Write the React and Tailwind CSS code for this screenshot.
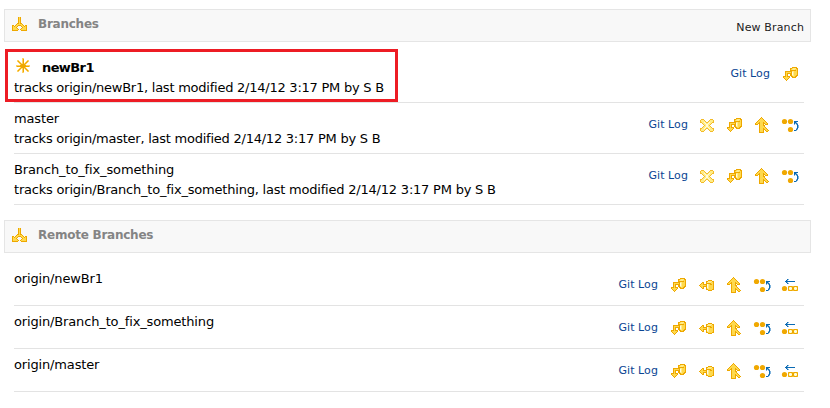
import React from 'react';

const palette = {
  G: '#eea800',
  H: '#f3bb2a',
  S: '#fed266',
  F: '#fed94e',
  L: '#ffec88',
  W: '#fffbe0',
  B: '#0a6ab4',
  b: '#7fb2da',
};

const bitmaps = {
  branch: [
    '......GFG......',
    '......GFG......',
    '......GFG......',
    '......GFG......',
    '......GFG......',
    '......GFG......',
    '.....GGFGG.....',
    '....GFFFFFG....',
    'GG.GFFGGGFFG.GG',
    'GFGFFG...GFFGFG',
    'GFFFG.....GFFFG',
    'GFFFFG...GFFFFG',
    'GFFFFFG.GFFFFFG',
    'GGGGGG...GGGGGG',
  ],
  star: [
    '......SS.......',
    '......SG.......',
    '.SS...SG...SS..',
    '.SGS..SG..SGS..',
    '..SGS.SG.SGS...',
    '...SGSSGSGS....',
    '....SGGGGS.....',
    'SSSSGGGGGGSSSS.',
    'SGGGGGGGGGGGGS.',
    '....SGGGGS.....',
    '...SGSSGSGS....',
    '..SGS.SG.SGS...',
    '.SGS..SG..SGS..',
    '.SS...SG...SS..',
    '......SS.......',
  ],
  delete: [
    '',
    '',
    '..HHH......HHH..',
    '.HLLLH....HLLLH.',
    '.HLLLLH..HLLLLH.',
    '.HHLLWLHHLWLLHH.',
    '...HLLWLLWLLH...',
    '....HLLWWLLH....',
    '.....HLWWLH.....',
    '....HLLWWLLH....',
    '...HLLWLLWLLH...',
    '.HHLLWLHHLWLLHH.',
    '.HLLLLH..HLLLLH.',
    '.HLLLH....HLLLH.',
    '..HHH......HHH..',
  ],
  pull: [
    '',
    '.........GGGGG..',
    '.......GGFLLLGG.',
    '.......GFLLLFFG.',
    '.......GGGGGGFG.',
    '..GGGGGGGLLFFFG.',
    '..GFFFFFGWLFFFG.',
    '..GFGGGGGWLFFFG.',
    '..GFG..GGWLFFFG.',
    '..GFG..GGLLFFGG.',
    'GGGFGGG.GGFFGG..',
    'GFFFFFG..GGGG...',
    '.GFFFG..........',
    '..GFG...........',
    '...G............',
  ],
  push: [
    '',
    '',
    '',
    '.........GGGG...',
    '.......GGLLLLGG.',
    '...GG..GLLLLFFG.',
    '..GFG..GGGGGFFG.',
    '.GFFGGGGWLFGGFG.',
    'GFFFFFFGWLFFFFG.',
    '.GFFGGGGWLFFFFG.',
    '..GFG..GWLFFFFG.',
    '...GG..GLLFFFFG.',
    '.......GGFFFFGG.',
    '.........GGGG...',
  ],
  merge: [
    '......G.......',
    '.....GFG......',
    '....GFFFG.....',
    '...GFFFFFG....',
    '..GFFFFFFFG...',
    '.GFFGFFFGFFG..',
    'GFFGGFFFGGFFG.',
    'GGG.GFFFG.GGG.',
    '....GFFFGG....',
    '....GFFFFG....',
    '....GFFFFFG...',
    '....GFFFGFFG..',
    '....GFFFGGFFG.',
    '....GFFFG.GFFG',
    '....GFFFG..GG.',
    '....GGGGG.....',
  ],
  rebase: [
    '',
    '',
    '.............',
    '.............',
    '...........BBBB.',
    '...........BBb..',
    '...........BbBb.',
    '...........b.bB.',
    '..............Bb',
    '..............Bb',
    '..............Bb',
    '.............bB.',
    '.............Bb.',
    '...........BBb..',
  ],
  reset: [
    '',
    '',
    '....Bb..........',
    '...Bb...........',
    '..BBBBBBBBBB....',
    '...Bb...........',
    '....Bb..........',
    '',
    '',
    '.....HGGGHHGGGH.',
    '.....GLWLGGLWLG.',
    '.....GWWWGGWWWG.',
    '.....GLWLGGLWLG.',
    '.....HGGGHHGGGH.',
  ],
};

const dots = {
  rebase: [[1.5, 4.5], [7.5, 4.5], [7.5, 12.5]],
  reset: [[1.5, 11.5]],
};

function Icon({ name }) {
  return (
    <svg width="16" height="16" viewBox="0 0 16 16" className="block shrink-0 overflow-visible">
      {bitmaps[name].flatMap((row, y) =>
        [...row].map((key, x) =>
          palette[key] ? (
            <rect key={`${x}-${y}`} x={x} y={y} width="1" height="1" fill={palette[key]} shapeRendering="crispEdges" />
          ) : null
        )
      )}
      {(dots[name] || []).map(([cx, cy]) => (
        <circle key={`${cx}-${cy}`} cx={cx} cy={cy} r="2.6" fill="#f0a800" />
      ))}
    </svg>
  );
}

function SectionHeader({ title, action }) {
  return (
    <header className="ml-1 flex h-[33px] w-[807px] border border-[#e5e5e5] bg-[#f8f8f8] pl-[7px] pr-[6px]">
      <div className="pt-[7px]"><Icon name="branch" /></div>
      <h2 className="ml-[10px] pt-[6px] text-[12px] font-bold leading-4 tracking-[-0.24px] text-[#848484]">{title}</h2>
      {action && <a className="ml-auto pt-[10px] text-[11px] leading-4 tracking-[0.14px] text-[#222]">{action}</a>}
    </header>
  );
}

function Actions({ names, linkGap }) {
  return (
    <div className="ml-auto flex pr-[5px] pt-[8px]">
      <a className={`${linkGap} text-[11px] leading-4 tracking-[0.08px] text-[#0b4593]`}>Git Log</a>
      <div className="flex gap-3">
        {names.map((name) => <Icon key={name} name={name} />)}
      </div>
    </div>
  );
}

function LocalBranch({ name, detail, current, actions, linkGap = 'mr-[11px]', detailTracking = 'tracking-[-0.24px]' }) {
  return (
    <li className="flex h-[51px] border-b border-[#e3e3e3] pt-[6px]">
      <div className="text-[13px] leading-5">
        <div className={current ? 'flex font-bold tracking-[-0.6px]' : 'flex tracking-[-0.13px]'}>
          {current && <span className="ml-[2px] mr-[10px]"><Icon name="star" /></span>}
          {name}
        </div>
        <div className={`whitespace-nowrap ${detailTracking}`}>{detail}</div>
      </div>
      <Actions names={actions} linkGap={linkGap} />
    </li>
  );
}

function RemoteBranch({ name }) {
  return (
    <li className="flex h-[43px] border-b border-[#e3e3e3] pt-[6px]">
      <div className="text-[13px] leading-5 tracking-[-0.15px]">{name}</div>
      <Actions names={['pull', 'push', 'merge', 'rebase', 'reset']} linkGap="mr-[13px]" />
    </li>
  );
}

export default function App() {
  return (
    <main className="relative h-[408px] w-[830px] bg-white pt-[9px] font-['DejaVu_Sans',sans-serif] text-black">
      <SectionHeader title="Branches" action="New Branch" />
      <ul className="ml-[14px] w-[790px] pt-[10px]">
        <LocalBranch name="newBr1" detail="tracks origin/newBr1, last modified 2/14/12 3:17 PM by S B" current actions={['pull']} linkGap="mr-[13px]" />
        <LocalBranch name="master" detail="tracks origin/master, last modified 2/14/12 3:17 PM by S B" actions={['delete', 'pull', 'merge', 'rebase']} />
        <LocalBranch name="Branch_to_fix_something" detail="tracks origin/Branch_to_fix_something, last modified 2/14/12 3:17 PM by S B" actions={['delete', 'pull', 'merge', 'rebase']} detailTracking="tracking-[-0.21px]" />
      </ul>
      <div className="pt-[15px]"><SectionHeader title="Remote Branches" /></div>
      <ul className="ml-[14px] w-[790px] pt-[10px]">
        <RemoteBranch name="origin/newBr1" />
        <RemoteBranch name="origin/Branch_to_fix_something" />
        <RemoteBranch name="origin/master" />
      </ul>
      <div className="absolute left-[5px] top-[49px] h-[53px] w-[393px] border-[3px] border-[#ed1c24]" />
    </main>
  );
}
